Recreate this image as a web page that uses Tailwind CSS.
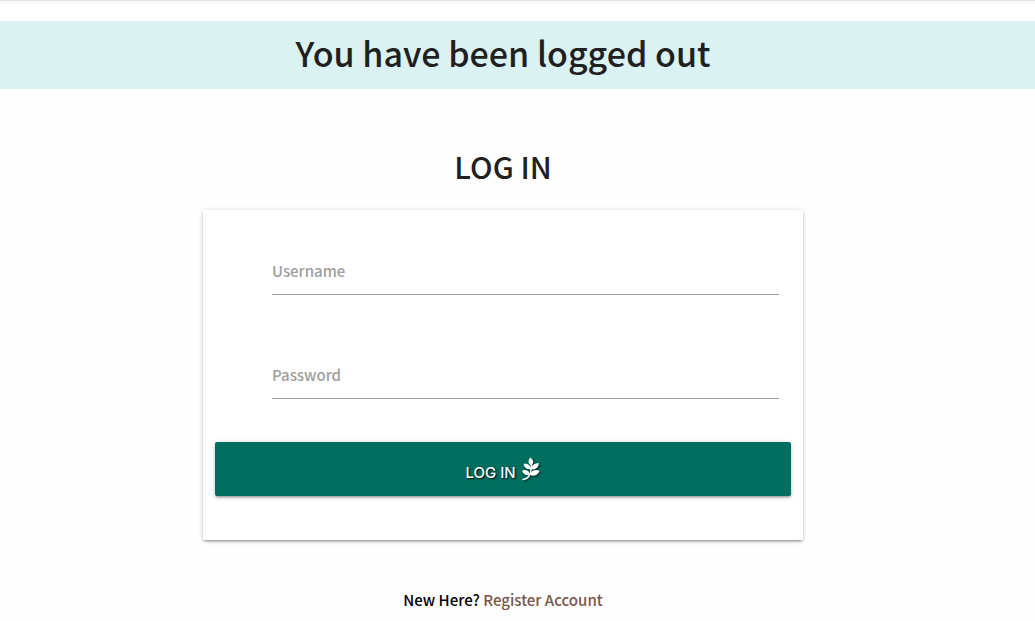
<!DOCTYPE html>
<html lang="en">
<head>
<meta charset="utf-8">
<meta name="viewport" content="width=device-width, initial-scale=1">
<title>Log In</title>
<script src="https://cdn.jsdelivr.net/npm/@tailwindcss/browser@4"></script>
</head>
<body class="bg-[#fefefe] font-['Noto_Sans_CJK_SC',sans-serif] font-medium text-[#1f2021]">
<div class="h-[21px] border-t border-[#e4e4e4] bg-linear-to-b from-[#f7f7f7] from-0% to-white to-20%"></div>
<header class="bg-[#dbf2f3] pr-[29px] pb-1 text-center">
  <h1 class="text-[34px] leading-[64px]">You have been logged out</h1>
</header>
<main class="pr-[29px] pt-[54px] text-center">
  <h2 class="text-[30px] leading-[46px]">LOG IN</h2>
  <form class="mx-auto mt-[21px] max-w-[600px] rounded-xs bg-white px-3 pt-9 pb-11 text-left shadow-[0_2px_2px_rgba(0,0,0,0.14),0_3px_1px_-2px_rgba(0,0,0,0.12),0_1px_5px_rgba(0,0,0,0.2)]">
    <div class="relative ml-[57px] mr-3">
      <input id="username" type="text" placeholder=" " class="peer block h-[49px] w-full border-b border-[#9e9e9e] outline-none">
      <label for="username" class="absolute left-0 top-[13px] text-[15px] leading-6 text-[#9e9e9e] peer-focus:hidden peer-[:not(:placeholder-shown)]:hidden">Username</label>
    </div>
    <div class="relative ml-[57px] mr-3 mt-[55px]">
      <input id="password" type="password" placeholder=" " class="peer block h-[49px] w-full border-b border-[#9e9e9e] outline-none">
      <label for="password" class="absolute left-0 top-[13px] text-[15px] leading-6 text-[#9e9e9e] peer-focus:hidden peer-[:not(:placeholder-shown)]:hidden">Password</label>
    </div>
    <button type="submit" class="mt-[43px] flex h-[54px] w-full items-center justify-center gap-[5px] rounded-xs bg-[#006e5f] font-['Inter',sans-serif] text-[15px] text-white shadow-[0_2px_2px_rgba(0,0,0,0.14),0_3px_1px_-2px_rgba(0,0,0,0.12),0_1px_5px_rgba(0,0,0,0.2)] text-shadow-[1px_1px_2px_#000]">
      <span class="pt-2">LOG IN</span>
      <svg class="h-6 w-5 drop-shadow-[1px_1px_1px_rgba(0,0,0,0.7)]" viewBox="0 0 20 24" fill="#fff" aria-hidden="true">
        <path d="M2 22.500Q8 21.500 9.500 16L10.500 8" fill="none" stroke="#fff" stroke-width="1.500" stroke-linecap="round"/>
        <path d="M10 8.500C6.900 6.500 6.800 3.500 9.300 .500C12.700 3 13.300 6.500 10 8.500Z"/>
        <path d="M9.800 12.300C5.500 12.700 3.200 10.700 2.500 6.800C6.700 6.200 9.700 8 9.800 12.300Z"/>
        <path d="M10 12.300C10.700 8 13.700 6 18 6.300C17.400 10.700 14.600 12.900 10 12.300Z"/>
        <path d="M8.800 18C5 18.700 2.500 17.500 1 13.800C4.800 11.900 8.200 13.700 8.800 18Z"/>
        <path d="M9 17.700C10.300 13.400 14 12 18.700 13.800C16.900 18.300 13 20 9 17.700Z"/>
      </svg>
    </button>
  </form>
  <p class="mt-12 text-[15px] leading-6 text-black">New Here? <a href="#" class="text-[#795548]">Register Account</a></p>
</main>
</body>
</html>
